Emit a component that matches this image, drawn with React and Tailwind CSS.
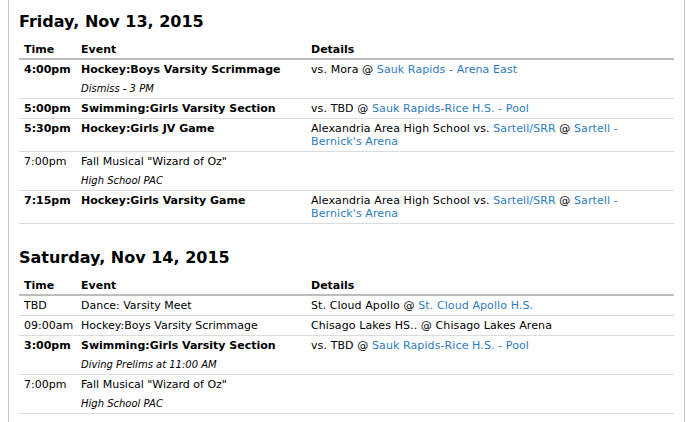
const LINK = 'text-[#2d7cc1]';

const days = [
  {
    title: 'Friday, Nov 13, 2015',
    rows: [
      {
        time: '4:00pm',
        event: 'Hockey:Boys Varsity Scrimmage',
        bold: true,
        note: 'Dismiss - 3 PM',
        details: [['vs. Mora @ '], ['Sauk Rapids - Arena East', true]],
      },
      {
        time: '5:00pm',
        event: 'Swimming:Girls Varsity Section',
        bold: true,
        details: [['vs. TBD @ '], ['Sauk Rapids-Rice H.S. - Pool', true]],
      },
      {
        time: '5:30pm',
        event: 'Hockey:Girls JV Game',
        bold: true,
        details: [
          ['Alexandria Area High School vs. '],
          ['Sartell/SRR', true],
          [' @ '],
          ["Sartell - Bernick's Arena", true],
        ],
      },
      {
        time: '7:00pm',
        event: 'Fall Musical "Wizard of Oz"',
        note: 'High School PAC',
        details: [],
      },
      {
        time: '7:15pm',
        event: 'Hockey:Girls Varsity Game',
        bold: true,
        details: [
          ['Alexandria Area High School vs. '],
          ['Sartell/SRR', true],
          [' @ '],
          ["Sartell - Bernick's Arena", true],
        ],
      },
    ],
  },
  {
    title: 'Saturday, Nov 14, 2015',
    rows: [
      {
        time: 'TBD',
        event: 'Dance: Varsity Meet',
        details: [['St. Cloud Apollo @ '], ['St. Cloud Apollo H.S.', true]],
      },
      {
        time: '09:00am',
        event: 'Hockey:Boys Varsity Scrimmage',
        details: [['Chisago Lakes HS.. @ Chisago Lakes Arena']],
      },
      {
        time: '3:00pm',
        event: 'Swimming:Girls Varsity Section',
        bold: true,
        note: 'Diving Prelims at 11:00 AM',
        details: [['vs. TBD @ '], ['Sauk Rapids-Rice H.S. - Pool', true]],
      },
      {
        time: '7:00pm',
        event: 'Fall Musical "Wizard of Oz"',
        note: 'High School PAC',
        details: [],
      },
    ],
  },
];

function DayTable({ day }) {
  return (
    <section>
      <h2 className="text-[16px] leading-[20px] font-bold text-black">{day.title}</h2>
      <table className="mt-[8px] w-full table-fixed border-collapse text-[11px] leading-[13px] text-black">
        <colgroup>
          <col className="w-[57px]" />
          <col className="w-[230px]" />
          <col />
        </colgroup>
        <thead>
          <tr className="border-b-2 border-[#bdbdbd]">
            <th className="px-[5px] pt-[3px] pb-[2px] text-left font-bold">Time</th>
            <th className="px-[5px] pt-[3px] pb-[2px] text-left font-bold">Event</th>
            <th className="px-[5px] pt-[3px] pb-[2px] text-left font-bold">Details</th>
          </tr>
        </thead>
        <tbody>
          {day.rows.map((r, i) => (
            <tr key={i} className="border-b border-[#dcdcdc] align-top">
              <td className={`px-[5px] py-[3px] whitespace-nowrap ${r.bold ? 'font-bold' : ''}`}>{r.time}</td>
              <td className="px-[5px] py-[3px]">
                <div className={r.bold ? 'font-bold' : ''}>{r.event}</div>
                {r.note && <div className="mt-[6px] text-[10px] italic">{r.note}</div>}
              </td>
              <td className="pl-[5px] pr-[16px] py-[3px] tracking-[0.1px]">
                {r.details.map(([t, link], j) =>
                  link ? (
                    <span key={j} className={LINK}>{t}</span>
                  ) : (
                    <span key={j}>{t}</span>
                  )
                )}
              </td>
            </tr>
          ))}
        </tbody>
      </table>
    </section>
  );
}

export default function App() {
  return (
    <div className="min-h-[422px] bg-white font-['DejaVu_Sans',Verdana,sans-serif]">
      <div className="ml-[8px] w-[677px] min-h-[422px] border-x border-[#c2c2c2] px-[10px] pt-[12px]">
        <div className="flex flex-col gap-[24px]">
          {days.map((d) => (
            <DayTable key={d.title} day={d} />
          ))}
        </div>
      </div>
    </div>
  );
}
